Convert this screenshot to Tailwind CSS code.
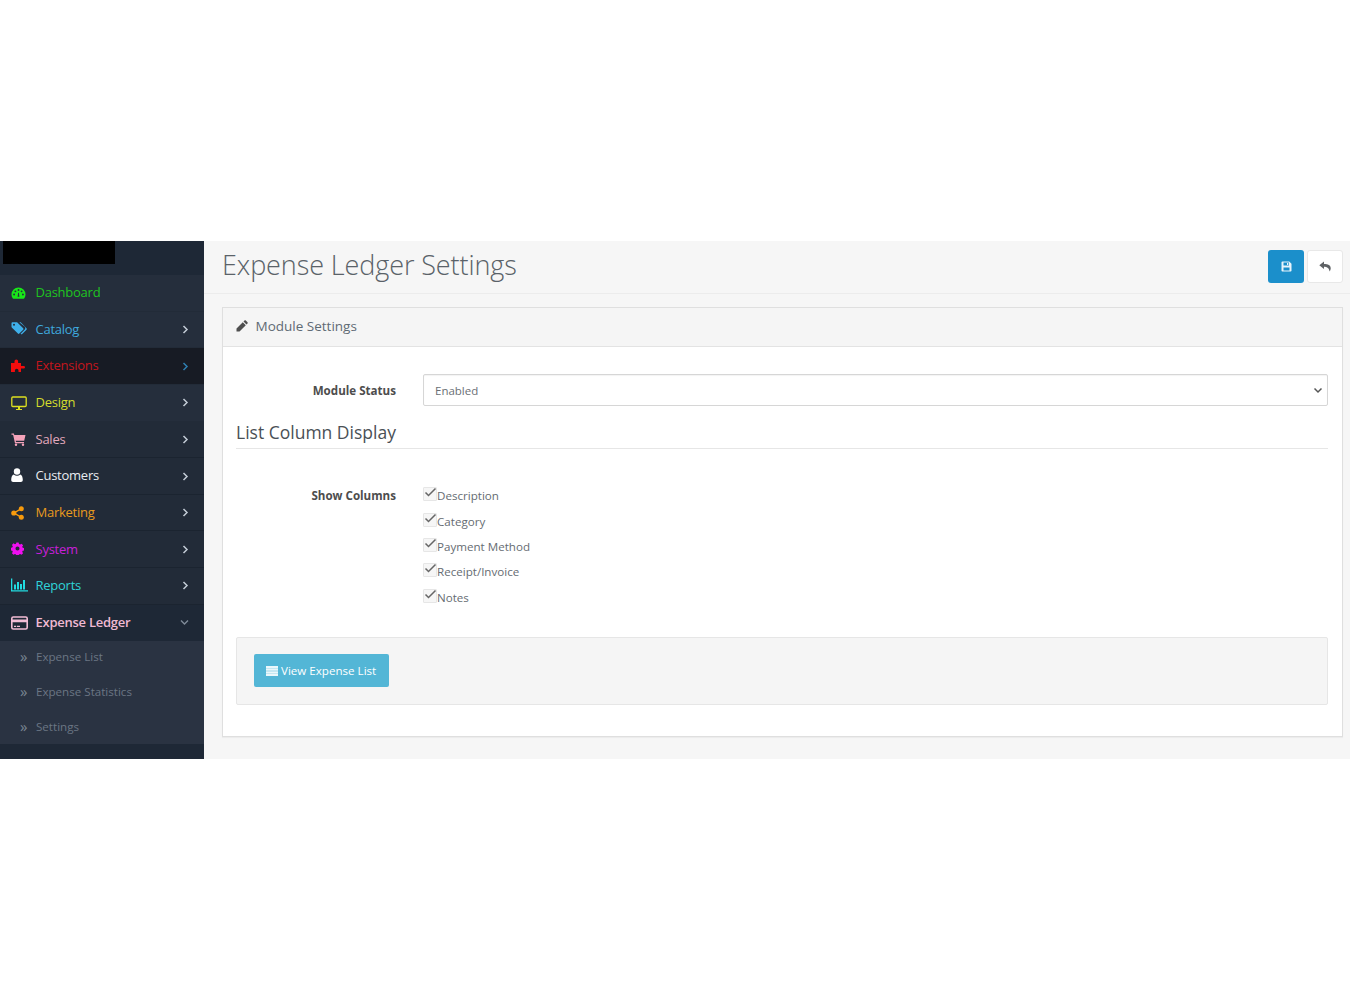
<!DOCTYPE html>
<html><head><meta charset="utf-8"><script src="https://cdn.jsdelivr.net/npm/@tailwindcss/browser@4"></script></head>
<body class="bg-white font-['Open_Sans',sans-serif] h-[1000px] overflow-hidden">
<div class="h-[241px]"></div>
<div class="flex h-[518px] bg-[#f6f6f6]">
  <aside class="w-[204px] shrink-0 bg-[#1e2836] flex flex-col">
    <div class="h-[34px] pl-[3px] bg-[#1e2836]"><div class="w-[112px] h-[23px] bg-black"></div></div>
    <nav class="text-[13px] tracking-[-0.25px]">
      <a class="flex items-center h-[36.65px] bg-[#252e3c] border-b border-[#222b38] pl-[11px] pr-[15px] text-[#1fc41f]">
        <svg class="w-[15px] h-[14px] mr-[9.500px]" viewBox="0 0 16 14"><path fill="#19e619" fill-rule="evenodd" d="M8 1a7.500 7.500 0 0 0-7.500 7.500c0 1.600.5 3 1.300 4.200.2.200.4.300.7.300h11c.3 0 .5-.1.700-.3.8-1.200 1.300-2.600 1.300-4.200A7.500 7.500 0 0 0 8 1zM3.300 9.600a1 1 0 1 1 0-2 1 1 0 0 1 0 2zm1.400-3.400a1 1 0 1 1 0-2 1 1 0 0 1 0 2zM8 4.800a1 1 0 1 1 0-2 1 1 0 0 1 0 2zm.9 6.200H7.100l.5-4.400h.8zm2.400-4.800a1 1 0 1 1 0-2 1 1 0 0 1 0 2zm1.400 3.400a1 1 0 1 1 0-2 1 1 0 0 1 0 2z"/></svg>
        <span>Dashboard</span></a>
      <a class="flex items-center h-[36.65px] bg-[#252e3c] border-b border-[#222b38] pl-[11px] pr-[15px] text-[#3fa9dd]">
        <svg class="w-[16px] h-[13px] mr-[8.500px] -mt-[2px]" viewBox="0 0 16 13"><path fill="#3fb0ea" d="M.5 1.200C.5.700.9.300 1.400.300h4.200c.4 0 .7.100 1 .4l5.600 5.600c.4.400.4 1 0 1.400L8.300 11.600c-.4.400-1 .4-1.400 0L1 5.800c-.3-.3-.5-.6-.5-1z"/><path fill="#3fb0ea" d="M8.300.3h1.400l5.800 5.900c.4.400.4 1.100 0 1.500l-4.300 4.200c-.4.400-1 .4-1.400 0l-.2-.2 4.200-4.200c.7-.7.7-1.900 0-2.700z"/><circle cx="3" cy="2.800" r="1" fill="#252e3c"/></svg>
        <span>Catalog</span><svg class="ml-auto w-[7px] h-[9px]" viewBox="0 0 7 9"><path d="M1.500 1l3.500 3.500L1.500 8" fill="none" stroke="#c3ccd6" stroke-width="1.500"/></svg></a>
      <a class="flex items-center h-[36.65px] bg-[#171b24] border-b border-[#222b38] pl-[11px] pr-[15px] text-[#c4161c]">
        <svg class="w-[15px] h-[13px] mr-[9.500px] -mt-[2px]" viewBox="0 0 15 13"><path fill="#f20d0d" d="M0 4h3.500V2.200a1.800 1.800 0 0 1 3.600 0V4H10v3h2.700a1.300 1.300 0 0 1 0 2.600H10V13H7.500v-1.500a1.800 1.800 0 0 0-3.600 0V13H0z"/></svg>
        <span>Extensions</span><svg class="ml-auto w-[7px] h-[9px]" viewBox="0 0 7 9"><path d="M1.500 1l3.500 3.500L1.500 8" fill="none" stroke="#2f7fb0" stroke-width="1.500"/></svg></a>
      <a class="flex items-center h-[36.65px] bg-[#252e3c] border-b border-[#222b38] pl-[11px] pr-[15px] text-[#d4dc2c]">
        <svg class="w-[16px] h-[14px] mr-[8.500px]" viewBox="0 0 16 14"><rect x=".8" y="1" width="14.400" height="9.500" rx="1" fill="none" stroke="#dde01f" stroke-width="1.300"/><path d="M5 13h6v.9H5z M7 10.500h2V13H7z" fill="#dde01f"/></svg>
        <span>Design</span><svg class="ml-auto w-[7px] h-[9px]" viewBox="0 0 7 9"><path d="M1.500 1l3.500 3.500L1.500 8" fill="none" stroke="#c3ccd6" stroke-width="1.500"/></svg></a>
      <a class="flex items-center h-[36.65px] bg-[#222b38] border-b border-[#1b2430] pl-[11px] pr-[15px] text-[#e3a9bd]">
        <svg class="w-[15px] h-[13px] mr-[9.500px]" viewBox="0 0 15 13"><path fill="#f5a3ba" d="M.5.500h2.400l.4 1.500H14.500l-1.300 5.800H4.700l.3 1.200h8v1.200H4l-1.900-8.500H.5z"/><circle cx="5" cy="11.700" r="1.200" fill="#f5a3ba"/><circle cx="12" cy="11.700" r="1.200" fill="#f5a3ba"/></svg>
        <span>Sales</span><svg class="ml-auto w-[7px] h-[9px]" viewBox="0 0 7 9"><path d="M1.500 1l3.500 3.500L1.500 8" fill="none" stroke="#c3ccd6" stroke-width="1.500"/></svg></a>
      <a class="flex items-center h-[36.65px] bg-[#222b38] border-b border-[#1b2430] pl-[11px] pr-[15px] text-[#e8ecf0]">
        <svg class="w-[12px] h-[14px] mr-[12.500px] -mt-[2px]" viewBox="0 0 12 14"><circle cx="6" cy="3.500" r="3.200" fill="#fff"/><path fill="#fff" d="M.2 12c0-2.500.7-5 2.500-5.500 1 .9 2.100 1.300 3.300 1.300s2.300-.4 3.300-1.300c1.800.5 2.500 3 2.500 5.500 0 1.200-.8 2-1.900 2H2.100C1 14 .2 13.200.2 12z"/></svg>
        <span>Customers</span><svg class="ml-auto w-[7px] h-[9px]" viewBox="0 0 7 9"><path d="M1.500 1l3.500 3.500L1.500 8" fill="none" stroke="#c3ccd6" stroke-width="1.500"/></svg></a>
      <a class="flex items-center h-[36.65px] bg-[#222b38] border-b border-[#1b2430] pl-[11px] pr-[15px] text-[#e89a1e]">
        <svg class="w-[13px] h-[14px] mr-[11.500px]" viewBox="0 0 13 14"><path d="M10 2.800L3 7l7 4.200" fill="none" stroke="#f79a0c" stroke-width="1.400"/><circle cx="10.300" cy="2.800" r="2.500" fill="#f79a0c"/><circle cx="2.800" cy="7" r="2.600" fill="#f79a0c"/><circle cx="10.300" cy="11.200" r="2.500" fill="#f79a0c"/></svg>
        <span>Marketing</span><svg class="ml-auto w-[7px] h-[9px]" viewBox="0 0 7 9"><path d="M1.500 1l3.500 3.500L1.500 8" fill="none" stroke="#c3ccd6" stroke-width="1.500"/></svg></a>
      <a class="flex items-center h-[36.65px] bg-[#222b38] border-b border-[#1b2430] pl-[11px] pr-[15px] text-[#c81fd8]">
        <svg class="w-[13px] h-[13px] mr-[11.500px] -mt-[1px]" viewBox="0 0 14 14"><path fill="#f00ff0" fill-rule="evenodd" d="M5.800.500h2.400l.4 1.700 1.200.5 1.500-.9 1.700 1.700-.9 1.500.5 1.200 1.700.4v2.400l-1.700.4-.5 1.200.9 1.500-1.700 1.700-1.500-.9-1.200.5-.4 1.700H5.800l-.4-1.700-1.200-.5-1.500.9-1.700-1.700.9-1.500-.5-1.200-1.700-.4V6.200l1.700-.4.5-1.200-.9-1.500 1.700-1.700 1.500.9 1.200-.5zM7 4.800a2.200 2.200 0 1 0 0 4.400 2.200 2.200 0 0 0 0-4.400z"/></svg>
        <span>System</span><svg class="ml-auto w-[7px] h-[9px]" viewBox="0 0 7 9"><path d="M1.500 1l3.500 3.500L1.500 8" fill="none" stroke="#c3ccd6" stroke-width="1.500"/></svg></a>
      <a class="flex items-center h-[36.65px] bg-[#222b38] border-b border-[#1b2430] pl-[11px] pr-[15px] text-[#2fd3d8]">
        <svg class="w-[17px] h-[14px] mr-[7.500px] -mt-[2px]" viewBox="0 0 17 14"><path fill="#22dbe0" d="M0 .5h1.300v11.700H17v1.300H0zM3 6.500h2v5H3zM6 4h2v7.500H6zM9 6h2v5.500H9zM12 2h2v9.500h-2z"/></svg>
        <span>Reports</span><svg class="ml-auto w-[7px] h-[9px]" viewBox="0 0 7 9"><path d="M1.500 1l3.500 3.500L1.500 8" fill="none" stroke="#c3ccd6" stroke-width="1.500"/></svg></a>
      <a class="flex items-center h-[36.65px] bg-[#1e2836] pl-[11px] pr-[15px] text-[#f0b9d3] font-semibold">
        <svg class="w-[17px] h-[14px] mr-[7.500px] -mt-[1px]" viewBox="0 0 17 14"><rect x=".8" y="1" width="15.400" height="12" rx="1.500" fill="none" stroke="#f3bdd6" stroke-width="1.600"/><path fill="#f3bdd6" d="M1 3.500h15v2.800H1zM3 9.800h2.200v1.200H3zM6 9.800h3v1.200H6z"/></svg>
        <span>Expense Ledger</span><svg class="ml-auto w-[9px] h-[7px] -mt-[1px]" viewBox="0 0 9 7"><path d="M1 1.500l3.500 3.500L8 1.500" fill="none" stroke="#7f8a98" stroke-width="1.400"/></svg></a>
    </nav>
    <div class="bg-[#2a3342] text-[11.600px] text-[#6b7684]">
      <a class="flex items-center h-[35px] pb-[5px] pl-[20px]"><span class="w-[16px] text-[15px] text-[#7a8592] leading-none">»</span>Expense List</a>
      <a class="flex items-center h-[35px] pb-[5px] pl-[20px]"><span class="w-[16px] text-[15px] text-[#7a8592] leading-none">»</span>Expense Statistics</a>
      <a class="flex items-center h-[33px] pb-[3px] pl-[20px]"><span class="w-[16px] text-[15px] text-[#7a8592] leading-none">»</span>Settings</a>
    </div>
  </aside>
  <main class="flex-1 min-w-0 flex flex-col">
    <header class="h-[53px] shrink-0 border-b border-[#ececec] flex items-start justify-between pl-[18px] pr-[7px] pt-[9px]">
      <h1 class="text-[27px] leading-[30px] font-light text-[#5a6268] tracking-[-0.1px]">Expense Ledger Settings</h1>
      <div class="flex gap-[3px]">
        <button class="w-[36px] h-[33px] rounded-[3px] bg-[#1b8fcb] flex items-center justify-center">
          <svg class="w-[11px] h-[11px]" viewBox="0 0 11 11"><path fill="#e8f4fb" fill-rule="evenodd" d="M.5 1.300C.5.800.9.500 1.300.500h6.900L10.500 2.800v6.900c0 .5-.4.800-.8.800H1.300c-.4 0-.8-.3-.8-.8zM2.500 1.500v3h5.500v-3zM6 2h1.300v2H6zM2.500 6.500v3h6v-3z"/></svg>
        </button>
        <button class="w-[36px] h-[33px] rounded-[3px] bg-white border border-[#e8e8e8] flex items-center justify-center">
          <svg class="w-[12px] h-[11px]" viewBox="0 0 12 11"><path fill="#5f6265" d="M5 .5L.3 4.300 5 8V5.700c2.800 0 4.800.8 5.700 4.800.8-1.600 1-2.500 1-3.300C11.700 4.300 9 3 5 3z"/></svg>
        </button>
      </div>
    </header>
    <section class="ml-[18px] mr-[7px] mt-[13px] h-[430px] border border-[#dfdfdf] bg-white shadow-[0_1px_1px_rgba(0,0,0,0.04)] flex flex-col">
      <div class="h-[39px] shrink-0 bg-[#f5f5f5] border-b border-[#e3e3e3] flex items-center pl-[13px] pb-[2px] text-[13.500px] text-[#5f6a74]">
        <svg class="w-[12px] h-[12px] mr-[7.500px]" viewBox="0 0 12 12"><path fill="#4f4f4f" d="M8.500.500c.4-.4.900-.4 1.300 0l1.700 1.700c.4.400.4.900 0 1.300l-1 1L7.500 1.500zM6.800 2.200l3 3L3.500 11.500H.500V8.500z"/></svg>
        Module Settings
      </div>
      <div class="pl-[13px] pr-[14px] pt-[27px] flex-1 flex flex-col">
        <div class="flex items-center">
          <label class="w-[160px] text-right text-[11.600px] font-bold text-[#4d4d4d] mr-[27px] pt-[1px]">Module Status</label>
          <div class="flex-1 h-[32px] border border-[#d6d6d6] rounded-[2px] flex items-center justify-between pl-[11px] pr-[4px] pt-[1px] text-[11.500px] text-[#6a6f75] shadow-[inset_0_1px_1px_rgba(0,0,0,0.05)]">
            <span>Enabled</span>
            <svg class="w-[10px] h-[7px]" viewBox="0 0 10 7"><path d="M1.500 1.500L5 5l3.500-3.500" fill="none" stroke="#555" stroke-width="1.500"/></svg>
          </div>
        </div>
        <h2 class="text-[17.500px] leading-[24px] text-[#4a5056] mt-[14px] pb-[4px] border-b border-[#e6e6e6]">List Column Display</h2>
        <div class="flex mt-[35px]">
          <label class="w-[160px] text-right text-[11.600px] font-bold text-[#4d4d4d] mr-[27px] leading-[24px]">Show Columns</label>
          <div class="flex flex-col text-[11.600px] text-[#666c72] leading-[16px] -mt-[0.4px]">
            <div class="flex items-center h-[25.400px]"><span class="w-[14px] h-[14px] relative bg-[#f6f6f6] border border-[#e6e6e6] rounded-[1px] -mt-[4px]"><svg class="absolute -top-[1px] left-0 w-[13px] h-[11px]" viewBox="0 0 13 11"><path d="M1.500 5.500l3 3L11.500 1.500" fill="none" stroke="#666" stroke-width="1.500"/></svg></span>Description</div>
            <div class="flex items-center h-[25.400px]"><span class="w-[14px] h-[14px] relative bg-[#f6f6f6] border border-[#e6e6e6] rounded-[1px] -mt-[4px]"><svg class="absolute -top-[1px] left-0 w-[13px] h-[11px]" viewBox="0 0 13 11"><path d="M1.500 5.500l3 3L11.500 1.500" fill="none" stroke="#666" stroke-width="1.500"/></svg></span>Category</div>
            <div class="flex items-center h-[25.400px]"><span class="w-[14px] h-[14px] relative bg-[#f6f6f6] border border-[#e6e6e6] rounded-[1px] -mt-[4px]"><svg class="absolute -top-[1px] left-0 w-[13px] h-[11px]" viewBox="0 0 13 11"><path d="M1.500 5.500l3 3L11.500 1.500" fill="none" stroke="#666" stroke-width="1.500"/></svg></span>Payment Method</div>
            <div class="flex items-center h-[25.400px]"><span class="w-[14px] h-[14px] relative bg-[#f6f6f6] border border-[#e6e6e6] rounded-[1px] -mt-[4px]"><svg class="absolute -top-[1px] left-0 w-[13px] h-[11px]" viewBox="0 0 13 11"><path d="M1.500 5.500l3 3L11.500 1.500" fill="none" stroke="#666" stroke-width="1.500"/></svg></span>Receipt/Invoice</div>
            <div class="flex items-center h-[25.400px]"><span class="w-[14px] h-[14px] relative bg-[#f6f6f6] border border-[#e6e6e6] rounded-[1px] -mt-[4px]"><svg class="absolute -top-[1px] left-0 w-[13px] h-[11px]" viewBox="0 0 13 11"><path d="M1.500 5.500l3 3L11.500 1.500" fill="none" stroke="#666" stroke-width="1.500"/></svg></span>Notes</div>
          </div>
        </div>
        <div class="mt-[26px] h-[68px] bg-[#f5f5f5] border border-[#e6e6e6] rounded-[2px] flex items-center pl-[17px]">
          <button class="h-[33px] w-[135px] rounded-[2px] bg-[#53b6d6] text-white text-[11.600px] flex items-center pl-[12px]">
            <svg class="w-[12px] h-[10px] mr-[3px]" viewBox="0 0 12 10"><path fill="#eaf7fb" d="M0 0h12v2.200H0zM0 2.600h12v2.200H0zM0 5.200h12v2.200H0zM0 7.800h12V10H0z"/></svg>View Expense List
          </button>
        </div>
      </div>
    </section>
  </main>
</div>
</body></html>
